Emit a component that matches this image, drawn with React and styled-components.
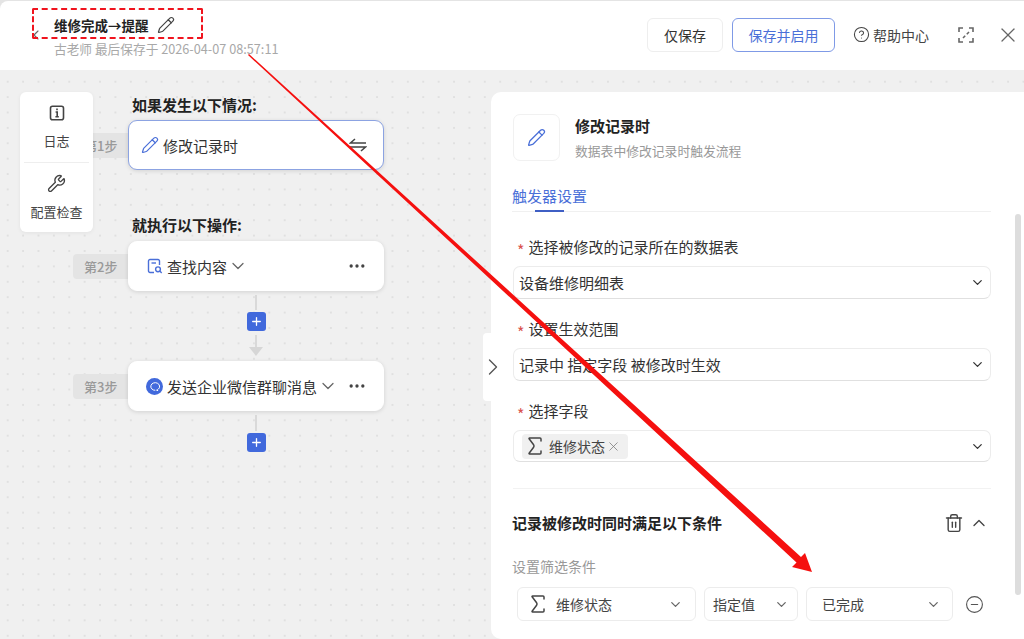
import React from 'react'
import styled, { createGlobalStyle } from 'styled-components'
import { ChevronDown, ChevronLeft, ChevronRight, ChevronUp, CircleHelp, CircleMinus, Ellipsis, Pencil, Plus, Sigma, Trash2, Wrench, X } from 'lucide-react'

const Global = createGlobalStyle`
  html, body { margin: 0; padding: 0; background: #f0f0f0; }
  body { font-family: "Noto Sans CJK SC", "Open Sans", sans-serif; color: #333; font-size: 15px; }
  * { box-sizing: border-box; }
`

const Page = styled.div`
  position: relative;
  width: 1024px;
  height: 639px;
  overflow: hidden;
  padding-top: 1px;
  background: #e4e4e4;
`
const Header = styled.header`
  height: 69px;
  display: flex;
  align-items: center;
  background: #fff;
  border-radius: 8px 0 0 0;
  padding: 0 4px 2px 28px;
`
const Back = styled.div`
  width: 26px;
  display: flex;
  color: #666;
`
const TitleBlock = styled.div`
  flex: 1;
  display: flex;
  flex-direction: column;
  gap: 5px;
  padding-top: 4px;
`
const TitleRow = styled.div`
  display: flex;
  align-items: center;
  gap: 8px;
  font-size: 13.5px;
  font-weight: 700;
  line-height: 20px;
  color: #222;
`
const Saved = styled.div`
  font-size: 12.7px;
  line-height: 18px;
  color: #a8a8a8;
`
const Button = styled.button`
  height: 34px;
  width: ${p => p.$w}px;
  margin-right: 9px;
  padding: 0;
  border-radius: 6px;
  font: inherit;
  font-size: 14px;
  background: #fff;
  border: 1px solid ${p => (p.$primary ? '#7f9ae6' : '#eeeeee')};
  color: ${p => (p.$primary ? '#4a6fd8' : '#333')};
`
const Help = styled.div`
  display: flex;
  align-items: center;
  gap: 3px;
  margin-left: 9px;
  margin-right: 29px;
  font-size: 14px;
  color: #444;
`
const HeadIcon = styled.div`
  display: flex;
  color: #666;
  margin-right: ${p => p.$mr || 0}px;
`

const Body = styled.div`
  height: 569px;
  display: flex;
  background-color: #f0f0f0;
  background-image: radial-gradient(#e0e0e0 0.8px, transparent 1px);
  background-size: 15.4px 15.4px;
  background-position: 0 4px;
`
const Canvas = styled.section`
  position: relative;
  flex: 0 0 491px;
  padding: 25px 0 0 73px;
`
const SideTools = styled.div`
  position: absolute;
  left: 20px;
  top: 22px;
  width: 73px;
  height: 140px;
  z-index: 2;
  background: #fff;
  border-radius: 6px;
  box-shadow: 0 1px 4px rgba(0, 0, 0, 0.06);
  display: flex;
  flex-direction: column;
  align-items: center;
`
const ToolItem = styled.div`
  flex: 1;
  align-self: stretch;
  display: flex;
  flex-direction: column;
  align-items: center;
  justify-content: center;
  gap: 10px;
  font-size: 13px;
  line-height: 18px;
  color: #444;
  & + & { border-top: 1px solid #eeeeee; }
`
const ToolDivided = styled(ToolItem)`
  margin: 0 4px;
`
const FlowHeading = styled.div`
  margin: ${p => p.$mt || 0}px 0 ${p => p.$mb || 0}px 59px;
  font-size: 15px;
  font-weight: 700;
  line-height: 20px;
  color: #222;
`
const StepRow = styled.div`
  display: flex;
  align-items: center;
  margin-top: ${p => p.$mt || 0}px;
`
const StepTag = styled.div`
  width: 55px;
  height: 25px;
  padding-left: 11px;
  border-radius: 4px 0 0 4px;
  background: #e4e4e4;
  color: #999;
  font-size: 13px;
  font-weight: 500;
  line-height: 25px;
`
const Card = styled.div`
  width: 256px;
  height: 50px;
  display: flex;
  align-items: center;
  padding: 0 ${p => p.$pr || 16}px 0 ${p => p.$pl || 18}px;
  background: #fff;
  border-radius: 9px;
  border: 1px solid ${p => (p.$active ? '#8ca3e2' : '#fff')};
  box-shadow: 0 1px 4px rgba(0, 0, 0, 0.13);
  color: #333;
`
const CardName = styled.span`
  margin-left: 4px;
  white-space: nowrap;
`
const Push = styled.div`
  margin-left: auto;
  display: flex;
  color: #444;
`
const Caret = styled.div`
  display: flex;
  margin-left: 1px;
  color: #666;
`
const Connector = styled.div`
  margin-left: 55px;
  width: 256px;
  display: flex;
  flex-direction: column;
  align-items: center;
`
const Line = styled.div`
  width: 2px;
  height: ${p => p.$h}px;
  margin-top: ${p => p.$mt || 0}px;
  background: #d9d9d9;
`
const ArrowHead = styled.div`
  width: 0;
  height: 0;
  border-left: 7px solid transparent;
  border-right: 7px solid transparent;
  border-top: 9px solid #d6d6d6;
`
const AddButton = styled.div`
  width: 19px;
  height: 19px;
  margin-top: 2px;
  display: flex;
  align-items: center;
  justify-content: center;
  border-radius: 3px;
  background: #4169dc;
  color: #fff;
`
const CollapseHandle = styled.div`
  position: absolute;
  right: 0;
  top: 263px;
  z-index: 1;
  width: 8px;
  height: 68px;
  display: flex;
  align-items: center;
  background: #fff;
  border-radius: 4px 0 0 4px;
  color: #555;
  svg { flex-shrink: 0; margin-left: -4px; }
`

const Panel = styled.aside`
  position: relative;
  flex: 1;
  margin-top: 22px;
  padding: 22px 33px 0 21px;
  background: #fff;
  border-radius: 10px 0 0 10px;
`
const PanelHead = styled.div`
  display: flex;
  align-items: center;
  gap: 15px;
  margin-left: 1px;
`
const IconBox = styled.div`
  width: 47px;
  height: 47px;
  display: flex;
  align-items: center;
  justify-content: center;
  border: 1px solid #f1f1f1;
  border-radius: 7px;
  color: #4a6fd8;
`
const PanelTitle = styled.div`
  font-size: 15px;
  font-weight: 700;
  line-height: 20px;
  color: #222;
  margin-bottom: 6px;
`
const PanelSub = styled.div`
  font-size: 12.8px;
  line-height: 18px;
  color: #999;
`
const Tabs = styled.div`
  position: relative;
  height: 39px;
  margin-top: 12px;
  border-bottom: 1px solid #f0f0f0;
`
const Tab = styled.div`
  font-size: 15px;
  line-height: 45px;
  height: 36px;
  color: #4a6fd8;
  &::after {
    content: '';
    position: absolute;
    left: 23px;
    bottom: -1px;
    width: 29px;
    height: 2px;
    background: #3f5fc4;
  }
`
const Scrollbar = styled.div`
  position: absolute;
  left: 524px;
  top: 122px;
  width: 6px;
  height: 381px;
  border-radius: 3px;
  background: #dddddd;
`
const Label = styled.div`
  display: flex;
  gap: 4px;
  height: 20px;
  margin: ${p => p.$mt}px 0 9px 5px;
  font-size: 15px;
  line-height: 20px;
  color: #333;
`
const Star = styled.span`
  color: #d9534f;
  font-size: 16px;
  height: 20px;
  line-height: 26px;
`
const Select = styled.div`
  width: 478px;
  height: ${p => p.$h || 33}px;
  margin-left: 1px;
  display: flex;
  align-items: center;
  justify-content: space-between;
  padding: 0 5px 0 ${p => p.$pl || 5}px;
  border: 1px solid #ececec;
  border-bottom-color: #e0e0e0;
  border-radius: 7px;
  font-size: 15px;
  color: #333;
`
const Chip = styled.div`
  width: 106px;
  height: 25px;
  display: flex;
  align-items: center;
  gap: 2px;
  padding-left: 1px;
  border-radius: 4px;
  background: #f0f0f0;
  font-size: 14px;
  color: #444;
  svg:last-child { margin-left: -1px; color: #777; }
`
const Divider = styled.div`
  width: 478px;
  margin: 26px 0 0 1px;
  border-top: 1px solid #f2f2f2;
`
const SectionHead = styled.div`
  display: flex;
  align-items: center;
  justify-content: space-between;
  width: 477px;
  margin-top: 24px;
  font-size: 15px;
  font-weight: 700;
  line-height: 20px;
  color: #222;
`
const SectionIcons = styled.div`
  display: flex;
  align-items: center;
  gap: 5px;
  color: #444;
`
const FilterLabel = styled.div`
  margin-top: 23px;
  font-size: 14px;
  line-height: 20px;
  color: #999;
`
const FilterRow = styled.div`
  display: flex;
  align-items: center;
  gap: 8px;
  margin: 11px 0 0 5px;
`
const FilterBox = styled.div`
  width: ${p => p.$w}px;
  height: 34px;
  display: flex;
  align-items: center;
  gap: 6px;
  padding: 0 ${p => p.$pr}px 0 ${p => p.$pl}px;
  border: 1px solid #ececec;
  border-radius: 6px;
  font-size: 14px;
  color: #444;
  svg:last-child { margin-left: auto; color: #666; }
`
const RemoveIcon = styled.div`
  display: flex;
  margin-left: 4px;
  color: #555;
`

const DashedNote = styled.div`
  position: absolute;
  left: 32px;
  top: 8px;
  width: 171px;
  height: 31px;
  border: 2px dashed #f0141e;
  border-radius: 2px;
  pointer-events: none;
`
const Overlay = styled.svg`
  position: absolute;
  left: 0;
  top: 0;
  z-index: 5;
  pointer-events: none;
`

const LogIcon = () => (
  <svg width="18" height="18" viewBox="0 0 18 18" fill="none" stroke="#444" strokeWidth="1.6">
    <rect x="2.500" y="2.200" width="13" height="13.600" rx="2" />
    <path d="M9 4.600v1.600M7.600 8h1.600v4.600M7.400 12.800h3.400" />
  </svg>
)
const SwapIcon = () => (
  <svg width="18" height="14" viewBox="0 0 18 14" fill="none" stroke="#444" strokeWidth="1.5">
    <path d="M17 5H1.500L6 1M1 9h15.500L12 13" />
  </svg>
)
const FindIcon = () => (
  <svg width="16" height="16" viewBox="0 0 16 16" fill="none" stroke="#4a6fd8" strokeWidth="1.400">
    <path d="M7 14.500H3a1.500 1.500 0 0 1-1.500-1.500V3A1.500 1.500 0 0 1 3 1.500h8A1.500 1.500 0 0 1 12.500 3v4" />
    <path d="M4.500 5h4.500" />
    <circle cx="11" cy="11.300" r="2.400" />
    <path d="m12.800 13.100 1.900 1.900" />
  </svg>
)
const WeComIcon = () => (
  <svg width="17" height="17" viewBox="0 0 17 17">
    <circle cx="8.500" cy="8.500" r="8.500" fill="#4169dc" />
    <path d="M12.300 11.200a4.400 3.800 0 1 0-3 1.100" fill="none" stroke="#fff" strokeWidth="1" />
    <circle cx="11.300" cy="12.200" r="0.900" fill="#fff" />
  </svg>
)
const FullIcon = () => (
  <svg width="16" height="16" viewBox="0 0 16 16" fill="none" stroke="#666" strokeWidth="1.600">
    <path d="M1 5V1h4M11 1h4v4M15 11v4h-4M5 15H1v-4M11 5 8.800 7.200M5 11l2.200-2.200" />
  </svg>
)

function App() {
  return (
    <Page>
      <Global />
      <Header>
        <Back><ChevronLeft size={16} strokeWidth={1.6} /></Back>
        <TitleBlock>
          <TitleRow>维修完成→提醒<Pencil size={18} strokeWidth={1.6} color="#444" /></TitleRow>
          <Saved>古老师 最后保存于 2026-04-07 08:57:11</Saved>
        </TitleBlock>
        <Button $w={76}>仅保存</Button>
        <Button $w={103} $primary>保存并启用</Button>
        <Help><CircleHelp size={17} strokeWidth={1.5} />帮助中心</Help>
        <HeadIcon $mr={22}><FullIcon /></HeadIcon>
        <HeadIcon><X size={24} strokeWidth={1.3} /></HeadIcon>
      </Header>
      <Body>
        <Canvas>
          <SideTools>
            <ToolItem><LogIcon />日志</ToolItem>
            <ToolDivided><Wrench size={19} strokeWidth={1.7} />配置检查</ToolDivided>
          </SideTools>
          <FlowHeading $mb={5}>如果发生以下情况:</FlowHeading>
          <StepRow>
            <StepTag>第1步</StepTag>
            <Card $active $pl={12} $pr={16}>
              <Pencil size={18} strokeWidth={1.6} color="#4a6fd8" />
              <CardName>修改记录时</CardName>
              <Push><SwapIcon /></Push>
            </Card>
          </StepRow>
          <FlowHeading $mt={45} $mb={6}>就执行以下操作:</FlowHeading>
          <StepRow>
            <StepTag>第2步</StepTag>
            <Card>
              <FindIcon />
              <CardName>查找内容</CardName>
              <Caret><ChevronDown size={20} strokeWidth={1.5} /></Caret>
              <Push><Ellipsis size={20} /></Push>
            </Card>
          </StepRow>
          <Connector>
            <Line $h={15} $mt={4} />
            <AddButton><Plus size={13} strokeWidth={2.4} /></AddButton>
            <Line $h={12} $mt={4} />
            <ArrowHead />
          </Connector>
          <StepRow $mt={5}>
            <StepTag>第3步</StepTag>
            <Card $pl={17}>
              <WeComIcon />
              <CardName>发送企业微信群聊消息</CardName>
              <Caret><ChevronDown size={20} strokeWidth={1.5} /></Caret>
              <Push><Ellipsis size={20} /></Push>
            </Card>
          </StepRow>
          <Connector>
            <Line $h={16} $mt={4} />
            <AddButton><Plus size={13} strokeWidth={2.4} /></AddButton>
          </Connector>
          <CollapseHandle><ChevronRight size={28} strokeWidth={1.2} /></CollapseHandle>
        </Canvas>
        <Panel>
          <PanelHead>
            <IconBox><Pencil size={19} strokeWidth={1.6} /></IconBox>
            <div>
              <PanelTitle>修改记录时</PanelTitle>
              <PanelSub>数据表中修改记录时触发流程</PanelSub>
            </div>
          </PanelHead>
          <Tabs><Tab>触发器设置</Tab></Tabs>
          <Scrollbar />
          <Label $mt={25}><Star>*</Star>选择被修改的记录所在的数据表</Label>
          <Select>设备维修明细表<ChevronDown size={15} strokeWidth={2} /></Select>
          <Label $mt={20}><Star>*</Star>设置生效范围</Label>
          <Select>记录中 指定字段 被修改时生效<ChevronDown size={15} strokeWidth={2} /></Select>
          <Label $mt={20}><Star>*</Star>选择字段</Label>
          <Select $h={32} $pl={8}>
            <Chip><Sigma size={24} strokeWidth={1.5} />维修状态<X size={15} strokeWidth={1.2} /></Chip>
            <ChevronDown size={15} strokeWidth={2} />
          </Select>
          <Divider />
          <SectionHead>
            记录被修改时同时满足以下条件
            <SectionIcons><Trash2 size={20} strokeWidth={1.7} /><ChevronUp size={20} strokeWidth={1.6} /></SectionIcons>
          </SectionHead>
          <FilterLabel>设置筛选条件</FilterLabel>
          <FilterRow>
            <FilterBox $w={179} $pl={8} $pr={12}><Sigma size={24} strokeWidth={1.5} />维修状态<ChevronDown size={15} strokeWidth={2} /></FilterBox>
            <FilterBox $w={94} $pl={8} $pr={8}>指定值<ChevronDown size={15} strokeWidth={2} /></FilterBox>
            <FilterBox $w={147} $pl={15} $pr={11}>已完成<ChevronDown size={15} strokeWidth={2} /></FilterBox>
            <RemoveIcon><CircleMinus size={19} strokeWidth={1.4} /></RemoveIcon>
          </FilterRow>
        </Panel>
      </Body>
      <DashedNote />
      <Overlay width="1024" height="639" viewBox="0 0 1024 639">
        <polygon points="248,55 249,54 801,557 805,553 812,572 792,567 796.500,562.500" fill="#f5100f" />
      </Overlay>
    </Page>
  )
}

export default App
